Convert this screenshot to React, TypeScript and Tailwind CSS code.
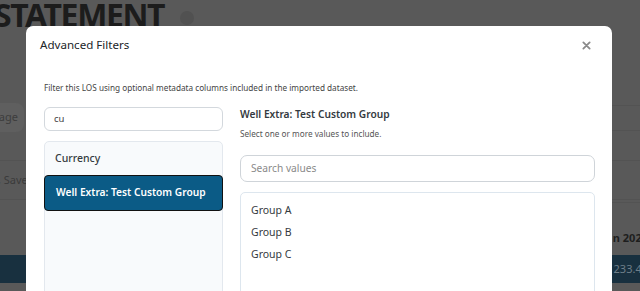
import React from "react";

function CloseIcon() {
  return (
    <svg width="9" height="9" viewBox="0 0 10 10" className="block">
      <path d="M1.5 1.5 L8.5 8.5 M8.5 1.5 L1.5 8.5" stroke="#8a8a8a" strokeWidth="2" strokeLinecap="round" />
    </svg>
  );
}

export default function App() {
  const font = { fontFamily: '"Noto Sans", "Open Sans", sans-serif' };
  return (
    <div className="relative w-[640px] h-[291px] overflow-hidden bg-[#595959]" style={font}>
      {/* dimmed page behind */}
      <div className="flex flex-col w-full">
        <div className="flex items-center h-[30px]">
          <span className="ml-[-6px] text-[32px] leading-[30px] font-bold text-[#1c1c1c] tracking-[-1.4px]">STATEMENT</span>
          <span className="ml-[16px] mt-[6px] w-[14px] h-[14px] rounded-full bg-[#515151]" />
        </div>
        <div className="h-[73px]" />
        <div className="flex items-center h-[29px]">
          <div className="ml-[-40px] w-[64px] h-[29px] rounded-[8px] bg-[#5f5f5f] flex items-center justify-end pr-[6px] text-[11px] text-[#3d3d3d]">age</div>
        </div>
        <div className="h-[28px]" />
        <div className="h-[40px] border-t border-b border-[#535353] flex items-center">
          <span className="ml-[-2px] text-[11px] text-[#3b3b3b]">, Save</span>
        </div>
        <div className="h-[55px] flex items-end justify-end">
          <span className="mr-[-8px] mb-[9px] text-[11px] font-bold text-[#1e1e1e]">n 2025</span>
        </div>
        <div className="h-[28px] bg-[#18303f] flex items-center justify-end">
          <span className="mr-[-8px] text-[11px] text-[#6e7e88]">233.48</span>
        </div>
      </div>
      <div className="absolute right-0 top-[105px] w-[28px] border-t border-[#535353]" />
      <div className="absolute right-0 top-[130px] w-[28px] border-t border-[#535353]" />
      <div className="absolute right-0 top-[202px] w-[28px] border-t border-[#535353]" />

      {/* modal */}
      <div className="absolute left-[26px] top-[26px] w-[586px] h-[290px] bg-white rounded-t-[7px] flex flex-col">
        <div className="flex items-center justify-between h-[38px] pl-[14px] pr-[21px]">
          <span className="text-[11.6px] text-[#212529]">Advanced Filters</span>
          <CloseIcon />
        </div>
        <div className="flex flex-col pl-[18px] pr-[17px] pt-[18px]">
          <p className="text-[8.2px] leading-[12px] text-[#444]">Filter this LOS using optional metadata columns included in the imported dataset.</p>
          <div className="flex gap-[17px] mt-[13px]">
            <div className="flex flex-col w-[179px] shrink-0">
              <div className="h-[24px] rounded-[6px] border border-[#d3d8dd] flex items-center pl-[9px] text-[9.5px] text-[#444]">cu</div>
              <div className="mt-[10px] h-[160px] rounded-[5px] border border-[#e3e8ee] bg-[#f8fafc] flex flex-col">
                <div className="h-[33px] flex items-center pl-[10px] text-[10.5px] font-medium text-[#343a40]">Currency</div>
                <div className="h-[36px] mx-[-1px] rounded-[4px] border border-[#111] bg-[#0b5b86] flex items-center pl-[11px] text-[10.2px] font-semibold text-white">Well Extra: Test Custom Group</div>
              </div>
            </div>
            <div className="flex flex-col flex-1">
              <div className="text-[10.2px] leading-[14px] font-semibold text-[#343a40]">Well Extra: Test Custom Group</div>
              <div className="mt-[7px] text-[8.2px] leading-[12px] text-[#555]">Select one or more values to include.</div>
              <div className="mt-[15px] h-[27px] rounded-[7px] border border-[#cfd4d9] flex items-center pl-[10px] text-[10.2px] text-[#8a8a8a]">Search values</div>
              <div className="mt-[10px] h-[120px] rounded-[5px] border border-[#dde6ee] flex flex-col pt-[7px] pl-[10px]">
                <div className="h-[22px] flex items-center text-[10.5px] text-[#343a40]">Group A</div>
                <div className="h-[22px] flex items-center text-[10.5px] text-[#343a40]">Group B</div>
                <div className="h-[22px] flex items-center text-[10.5px] text-[#343a40]">Group C</div>
              </div>
            </div>
          </div>
        </div>
      </div>
    </div>
  );
}
